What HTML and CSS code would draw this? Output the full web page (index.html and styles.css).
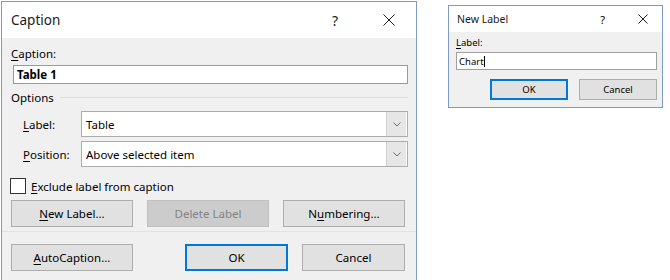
FILE: index.html
```html
<!DOCTYPE html>
<html lang="en">
<head>
<meta charset="utf-8">
<title>Caption</title>
<link rel="stylesheet" href="styles.css">
</head>
<body>
<div class="desk">
  <section class="dlg dlg-caption">
    <header class="tb">
      <span class="tt">Caption</span>
      <span class="help">?</span>
      <svg class="close" width="12" height="12" viewBox="0 0 12 12"><path d="M0.5 0.5L11.5 11.5M11.5 0.5L0.5 11.5" stroke="#1a1a1a" stroke-width="1" fill="none"/></svg>
    </header>
    <div class="body">
      <div class="lbl"><u>C</u>aption:</div>
      <div class="textbox bold">Table 1</div>
      <div class="group"><span>Options</span><span class="rule"></span></div>
      <div class="field">
        <span class="flabel"><u>L</u>abel:</span>
        <div class="combo"><span class="val">Table</span><span class="drop"><svg width="8" height="5" viewBox="0 0 8 5"><path d="M0.5 0.5L4 4L7.5 0.5" stroke="#707070" fill="none"/></svg></span></div>
      </div>
      <div class="field f2">
        <span class="flabel"><u>P</u>osition:</span>
        <div class="combo"><span class="val">Above selected item</span><span class="drop"><svg width="8" height="5" viewBox="0 0 8 5"><path d="M0.5 0.5L4 4L7.5 0.5" stroke="#707070" fill="none"/></svg></span></div>
      </div>
      <div class="check"><span class="box"></span><span><u>E</u>xclude label from caption</span></div>
      <div class="btnrow">
        <span class="btn w122"><u>N</u>ew Label...</span>
        <span class="btn w122 disabled">Delete Label</span>
        <span class="btn w122">N<u>u</u>mbering...</span>
      </div>
      <div class="sep"></div>
      <div class="btnrow r2">
        <span class="btn w122"><u>A</u>utoCaption...</span>
        <span class="btn w103 default ok">OK</span>
        <span class="btn w103">Cancel</span>
      </div>
    </div>
  </section>
  <section class="dlg dlg-new">
    <header class="tb small">
      <span class="tt">New Label</span>
      <span class="help">?</span>
      <svg class="close" width="10" height="10" viewBox="0 0 10 10"><path d="M0.5 0.5L9.5 9.5M9.5 0.5L0.5 9.5" stroke="#1a1a1a" stroke-width="1" fill="none"/></svg>
    </header>
    <div class="body">
      <div class="lbl"><u>L</u>abel:</div>
      <div class="textbox">Chart<span class="caret"></span></div>
      <div class="btnrow">
        <span class="btn default">OK</span>
        <span class="btn">Cancel</span>
      </div>
    </div>
  </section>
</div>
</body>
</html>
```
FILE: styles.css
```css
html, body {
  margin: 0;
  padding: 0;
  background: #ffffff;
  overflow: hidden;
}
body {
  font-family: "Noto Sans", "Open Sans", sans-serif;
  color: #000;
}
u { text-decoration: underline; text-underline-offset: 2px; text-decoration-thickness: 1px; }

.desk {
  display: flex;
  align-items: flex-start;
  width: 670px;
  height: 280px;
  overflow: hidden;
}

.dlg {
  box-sizing: border-box;
  border: 1px solid #7d9bc6;
  background: #f0f0f0;
  display: flex;
  flex-direction: column;
}

.tb {
  background: #ffffff;
  display: flex;
  align-items: center;
  flex: none;
}
.tt { flex: 1; }

/* Caption dialog */
.dlg-caption {
  margin: 1px 0 0 1px;
  width: 416px;
  height: 300px;
  font-size: 11.5px;
}
.dlg-caption .tb {
  height: 36px;
  padding: 0 0 0 9px;
}
.dlg-caption .tt { font-size: 13.5px; color: #1a1a1a; }
.dlg-caption .help { font-size: 14px; margin-right: 45px; color: #1a1a1a; }
.dlg-caption .close { margin-right: 21px; }

.dlg-caption .body {
  padding: 0 8px 0 9px;
  display: flex;
  flex-direction: column;
}
.lbl { line-height: 16px; }
.dlg-caption .lbl { margin-top: 8px; }

.textbox {
  box-sizing: border-box;
  background: #fff;
  border: 1px solid #9a9a9a;
  display: flex;
  align-items: center;
}
.dlg-caption .textbox {
  margin: 3px 0 0 2px;
  height: 19px;
  padding-left: 3px;
}
.bold { font-weight: 700; }

.group {
  margin-top: 4px;
  height: 18px;
  display: flex;
  align-items: center;
  gap: 6px;
}
.rule { flex: 1; height: 1px; background: #dcdcdc; }

.field {
  margin-top: 5px;
  height: 26px;
  display: flex;
  align-items: center;
}
.field.f2 { margin-top: 4px; }
.flabel { width: 70px; padding-left: 12px; box-sizing: border-box; }
.combo {
  box-sizing: border-box;
  flex: 1;
  height: 26px;
  background: #fff;
  border: 1px solid #acacac;
  display: flex;
  align-items: stretch;
}
.combo .val { flex: 1; padding-left: 4px; display: flex; align-items: center; }
.drop {
  width: 19px;
  margin: 0 1px 0 0;
  background: #e6e6e6;
  border-left: 1px solid #d0d0d0;
  display: flex;
  align-items: center;
  justify-content: center;
}

.check {
  margin-top: 10px;
  height: 18px;
  display: flex;
  align-items: center;
  gap: 5px;
}
.box {
  box-sizing: border-box;
  width: 16px;
  height: 16px;
  margin-left: -1px;
  background: #fff;
  border: 1px solid #333;
}

.btnrow {
  margin-top: 5px;
  display: flex;
  gap: 14px;
}
.btnrow.r2 { margin-top: 12px; }
.btnrow.r2 .ok { margin-left: 38px; }
.btn {
  box-sizing: border-box;
  height: 27px;
  background: #e1e1e1;
  border: 1px solid #adadad;
  display: flex;
  align-items: center;
  justify-content: center;
}
.w122 { width: 122px; }
.w103 { width: 103px; }
.btn.disabled { background: #cccccc; border-color: #bfbfbf; color: #838383; }
.btn.default { border: 2px solid #0078d7; }
.sep { margin-top: 4px; height: 1px; background: #e2e2e2; margin-left: -9px; margin-right: -8px; }

/* New Label dialog */
.dlg-new {
  margin: 5px 0 0 31px;
  width: 215px;
  height: 103px;
  font-size: 9.5px;
}
.dlg-new .tb {
  height: 26px;
  padding-left: 8px;
}
.dlg-new .tt { font-size: 10.5px; color: #1a1a1a; }
.dlg-new .help { font-size: 11px; margin-right: 33px; }
.dlg-new .close { margin-right: 14px; }
.dlg-new .body {
  padding: 0 5px 0 7px;
  display: flex;
  flex-direction: column;
}
.dlg-new .lbl { margin-top: 5px; line-height: 12px; }
.dlg-new .textbox {
  margin-top: 3px;
  height: 18px;
  padding-left: 2px;
  border-color: #a0a0a0;
}
.caret { display: inline-block; width: 1px; height: 11px; background: #000; }
.dlg-new .btnrow {
  margin-top: 9px;
  gap: 11px;
  justify-content: flex-end;
}
.dlg-new .btn { width: 78px; height: 21px; }
```
